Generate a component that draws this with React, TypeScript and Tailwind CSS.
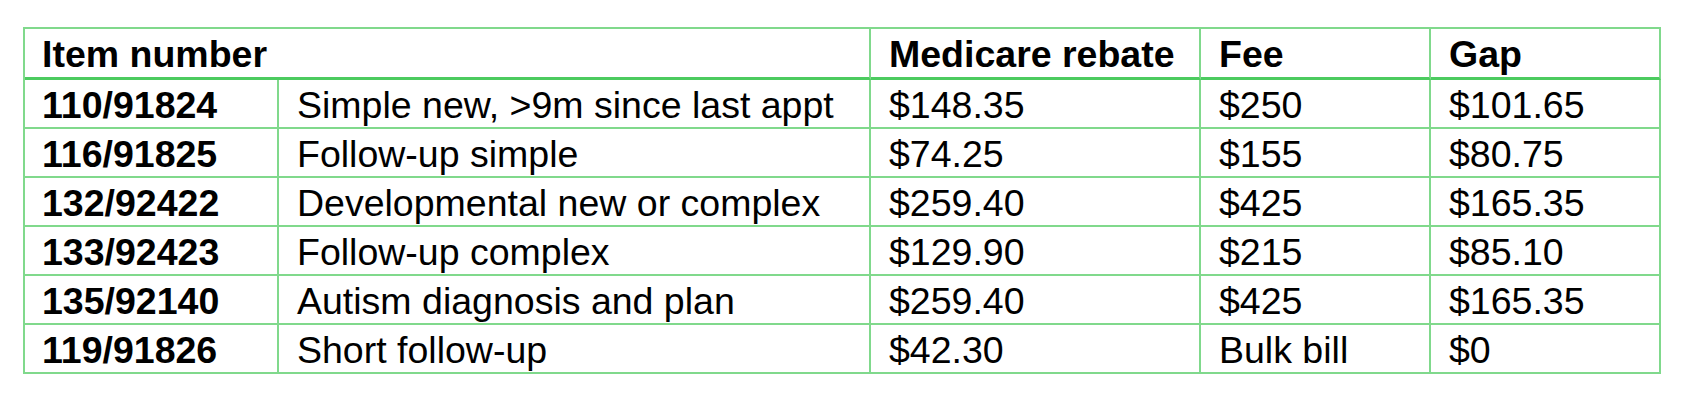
import React from "react";

const rows = [
  ["110/91824", "Simple new, >9m since last appt", "$148.35", "$250", "$101.65"],
  ["116/91825", "Follow-up simple", "$74.25", "$155", "$80.75"],
  ["132/92422", "Developmental new or complex", "$259.40", "$425", "$165.35"],
  ["133/92423", "Follow-up complex", "$129.90", "$215", "$85.10"],
  ["135/92140", "Autism diagnosis and plan", "$259.40", "$425", "$165.35"],
  ["119/91826", "Short follow-up", "$42.30", "Bulk bill", "$0"],
];

export default function App() {
  return (
    <div
      className="w-[1686px] h-[400px] bg-white pt-[27px] pl-[23px] text-black"
      style={{ fontFamily: '"Liberation Sans", Arial, sans-serif' }}
    >
      <div className="grid grid-cols-[254px_592px_330px_230px_230px] border-t-2 border-l-2 border-[#80d98c] text-[37.5px] w-max">
        <div className="col-span-2 h-[51px] border-r-2 border-r-[#80d98c] border-b-[3px] border-b-[#4ccb5f] flex items-center pt-[3px] pl-[17px] font-bold">
          Item number
        </div>
        <div className="h-[51px] border-r-2 border-r-[#80d98c] border-b-[3px] border-b-[#4ccb5f] flex items-center pt-[3px] pl-[18px] font-bold">
          Medicare rebate
        </div>
        <div className="h-[51px] border-r-2 border-r-[#80d98c] border-b-[3px] border-b-[#4ccb5f] flex items-center pt-[3px] pl-[18px] font-bold">
          Fee
        </div>
        <div className="h-[51px] border-r-2 border-r-[#80d98c] border-b-[3px] border-b-[#4ccb5f] flex items-center pt-[3px] pl-[18px] font-bold">
          Gap
        </div>
        {rows.map((r) => (
          <React.Fragment key={r[0]}>
            {r.map((c, i) => (
              <div
                key={i}
                className={
                  "h-[49px] border-r-2 border-b-2 border-[#80d98c] flex items-center pt-[3px] whitespace-nowrap " +
                  (i === 0 ? "pl-[17px] font-bold" : "pl-[18px]")
                }
              >
                {c}
              </div>
            ))}
          </React.Fragment>
        ))}
      </div>
    </div>
  );
}
